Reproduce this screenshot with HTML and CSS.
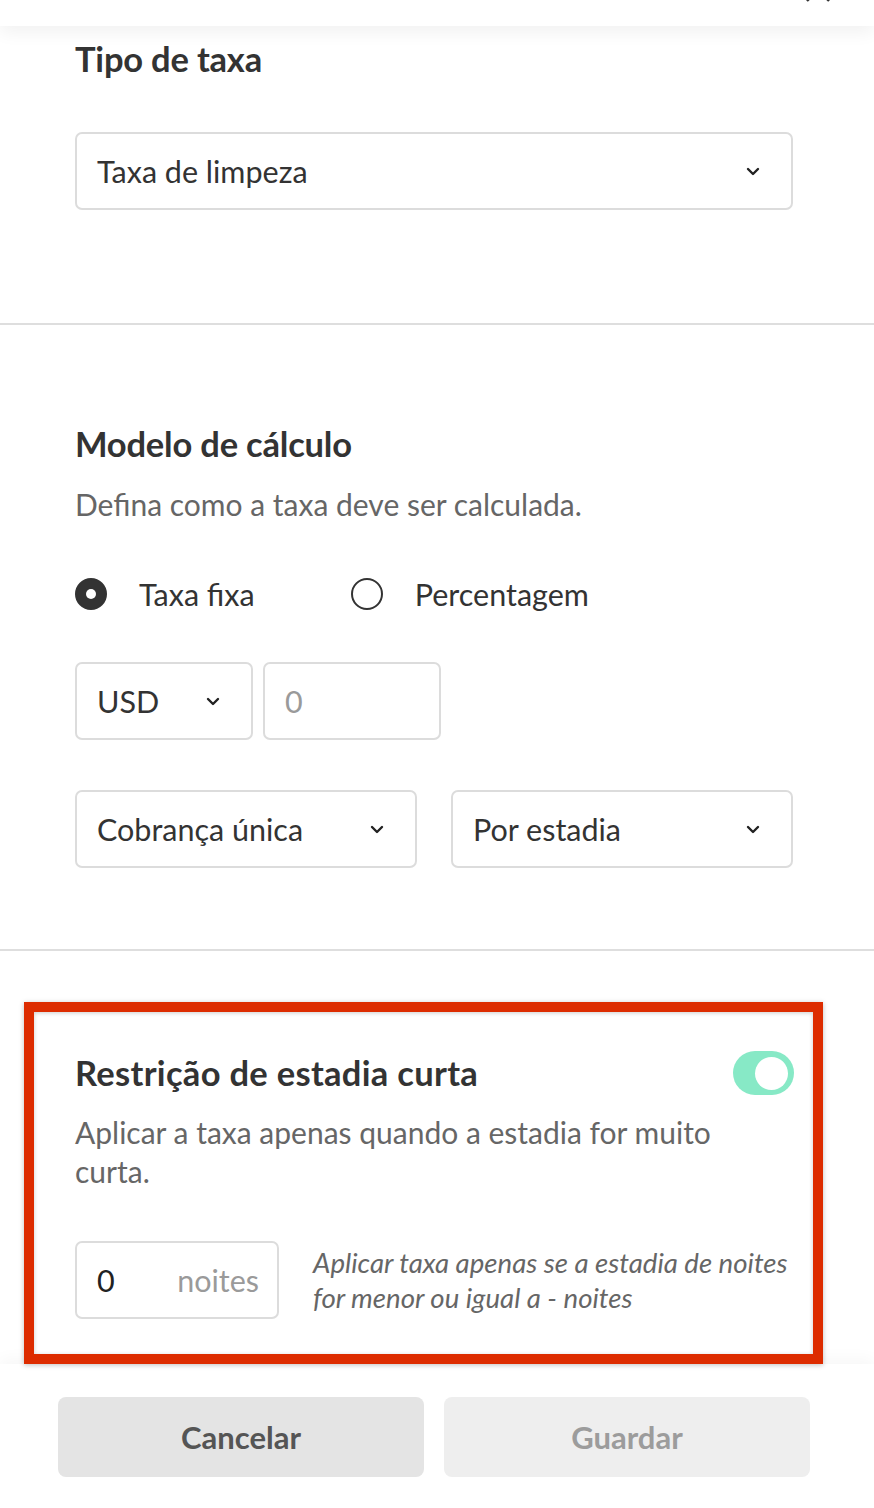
FILE: index.html
```html
<!DOCTYPE html>
<html lang="pt">
<head>
<meta charset="utf-8">
<title>Taxa</title>
<link rel="stylesheet" href="styles.css">
</head>
<body>
<div class="page">
  <header class="topbar">
    <svg class="close" width="28" height="28" viewBox="0 0 28 28"><path d="M3 3 L25 25 M25 3 L3 25" stroke="#333" stroke-width="2.4" fill="none"/></svg>
  </header>

  <section class="sec sec-type">
    <h2 class="title">Tipo de taxa</h2>
    <div class="field select wide">
      <span class="val">Taxa de limpeza</span>
      <svg class="chev" width="14" height="9" viewBox="0 0 14 9"><path d="M2 2 L7 7 L12 2" stroke="#222" stroke-width="2.4" fill="none" stroke-linecap="round" stroke-linejoin="round"/></svg>
    </div>
  </section>

  <hr class="divider">

  <section class="sec sec-model">
    <h2 class="title">Modelo de cálculo</h2>
    <p class="desc">Defina como a taxa deve ser calculada.</p>
    <div class="radios">
      <label class="radio"><span class="dot on"></span><span>Taxa fixa</span></label>
      <label class="radio"><span class="dot"></span><span>Percentagem</span></label>
    </div>
    <div class="row row-amount">
      <div class="field select cur">
        <span class="val">USD</span>
        <svg class="chev" width="14" height="9" viewBox="0 0 14 9"><path d="M2 2 L7 7 L12 2" stroke="#222" stroke-width="2.4" fill="none" stroke-linecap="round" stroke-linejoin="round"/></svg>
      </div>
      <div class="field amount"><span class="ph">0</span></div>
    </div>
    <div class="row row-freq">
      <div class="field select half">
        <span class="val">Cobrança única</span>
        <svg class="chev" width="14" height="9" viewBox="0 0 14 9"><path d="M2 2 L7 7 L12 2" stroke="#222" stroke-width="2.4" fill="none" stroke-linecap="round" stroke-linejoin="round"/></svg>
      </div>
      <div class="field select half">
        <span class="val">Por estadia</span>
        <svg class="chev" width="14" height="9" viewBox="0 0 14 9"><path d="M2 2 L7 7 L12 2" stroke="#222" stroke-width="2.4" fill="none" stroke-linecap="round" stroke-linejoin="round"/></svg>
      </div>
    </div>
  </section>

  <hr class="divider">

  <section class="highlight">
    <div class="hl-head">
      <h2 class="title hl-title">Restrição de estadia curta</h2>
      <span class="toggle"><span class="knob"></span></span>
    </div>
    <p class="desc hl-desc">Aplicar a taxa apenas quando a estadia for muito curta.</p>
    <div class="nights-row">
      <div class="field nights"><span class="num">0</span><span class="unit">noites</span></div>
      <p class="hint">Aplicar taxa apenas se a estadia de noites for menor ou igual a - noites</p>
    </div>
  </section>

  <footer class="footer">
    <button class="btn btn-cancel">Cancelar</button>
    <button class="btn btn-save">Guardar</button>
  </footer>
</div>
</body>
</html>
```

FILE: styles.css
```css
* { box-sizing: border-box; }
html, body { margin: 0; padding: 0; background: #fff; }
body {
  font-family: Lato, "Noto Sans", "Liberation Sans", sans-serif;
  color: #333;
}
.page { width: 874px; min-height: 1508px; display: flex; flex-direction: column; }

.topbar {
  height: 26px;
  background: #fff;
  box-shadow: 0 6px 18px rgba(0,0,0,0.06);
  display: flex;
  justify-content: flex-end;
  padding-right: 42px;
  overflow: hidden;
  position: relative;
  z-index: 2;
}
.close { margin-top: -24px; }

.sec { padding-left: 75px; padding-right: 81px; }
.sec-type { padding-top: 13px; padding-bottom: 113px; }
.sec-model { padding-top: 99px; padding-bottom: 81px; }

.title {
  margin: 0;
  font-size: 34.5px;
  line-height: 40px;
  font-weight: 700;
  color: #333;
  letter-spacing: -0.2px;
}
.hl-title { letter-spacing: 0.3px; }
.desc {
  margin: 21px 0 0;
  font-size: 30px;
  line-height: 39px;
  color: #666;
}
.hl-desc { max-width: 700px; margin-top: 18px; }

.divider { margin: 0; border: 0; height: 2px; background: #dedede; }

.field {
  height: 78px;
  border: 2px solid #dcdcdc;
  border-radius: 7px;
  display: flex;
  align-items: center;
  padding: 0 31px 0 20px;
  font-size: 30.5px;
  color: #333;
  background: #fff;
}
.select { justify-content: space-between; }
.sec-type .select { margin-top: 53px; }
.wide { width: 718px; }

.radios { margin-top: 50px; display: flex; align-items: center; height: 40px; }
.radio { display: flex; align-items: center; gap: 32px; font-size: 30.5px; color: #333; }
.radio + .radio { margin-left: 96px; }
.dot {
  width: 32px; height: 32px; border-radius: 50%;
  border: 2px solid #333; background: #fff;
  display: inline-block; position: relative;
}
.dot.on { background: #333; }
.dot.on::after {
  content: ""; position: absolute; left: 9px; top: 9px;
  width: 10px; height: 10px; border-radius: 50%; background: #fff;
}

.row { display: flex; }
.row-amount { margin-top: 48px; gap: 10px; }
.cur { width: 178px; }
.amount { width: 178px; }
.ph { color: #9a9a9a; }
.row-freq { margin-top: 50px; gap: 34px; }
.half { width: 342px; }

.highlight {
  margin: 51px 51px 0 24px;
  border: 10px solid #dd2c00;
  box-shadow: 0 1px 5px rgba(0,0,0,0.25), inset 0 1px 4px rgba(0,0,0,0.2);
  padding: 39px 19px 35px 41px;
  background: #fff;
  position: relative;
  z-index: 1;
}
.hl-head { display: flex; justify-content: space-between; align-items: center; }
.toggle {
  width: 61px; height: 44px; border-radius: 22px;
  background: #87e9c6;
  display: flex; align-items: center; justify-content: flex-end;
  padding-right: 6px;
}
.knob { width: 33px; height: 33px; border-radius: 50%; background: #fff; }

.nights-row { display: flex; align-items: center; margin-top: 50px; gap: 34px; }
.nights { width: 204px; justify-content: space-between; padding: 0 18px 0 20px; }
.num { color: #222; }
.unit { color: #9a9a9a; }
.hint {
  margin: 0;
  font-size: 27.6px;
  line-height: 35px;
  font-style: italic;
  color: #666;
  flex: 1;
}

.footer {
  flex: 1;
  background: #fff;
  box-shadow: 0 -6px 14px rgba(0,0,0,0.03);
  display: flex;
  gap: 20px;
  padding: 33px 64px 0 58px;
}
.btn {
  width: 366px; height: 80px;
  border: 0; border-radius: 8px;
  font-family: inherit;
  font-size: 31px; font-weight: 700;
}
.btn-cancel { background: #e4e4e4; color: #555; }
.btn-save { background: #eeeeee; color: #9c9c9c; }
```
